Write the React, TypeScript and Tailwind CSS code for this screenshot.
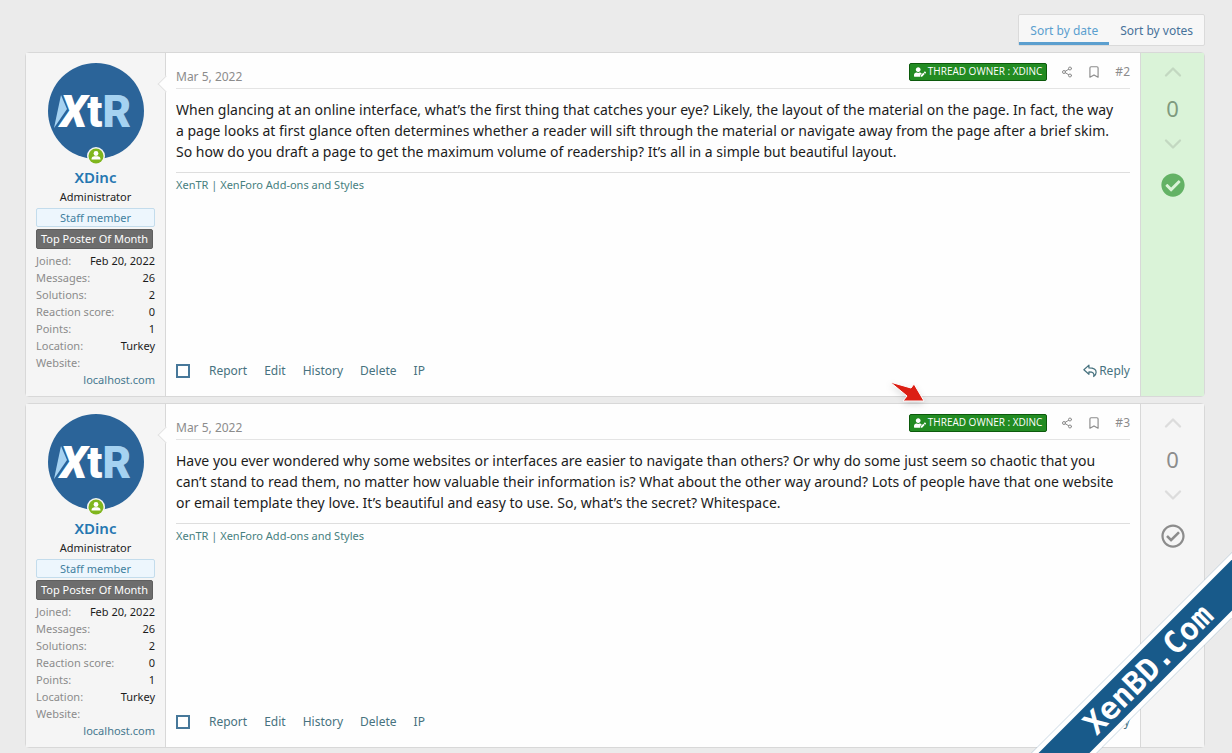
import { FaCheckCircle, FaRegCheckCircle, FaUserEdit } from "react-icons/fa";
import { Bookmark, ChevronDown, ChevronUp, Share2 } from "lucide-react";

type Post = {
  id: number;
  date: string;
  body: string;
  votes: number;
  isSolution: boolean;
};

const posts: Post[] = [
  {
    id: 2,
    date: "Mar 5, 2022",
    body: "When glancing at an online interface, what’s the first thing that catches your eye? Likely, the layout of the material on the page. In fact, the way a page looks at first glance often determines whether a reader will sift through the material or navigate away from the page after a brief skim. So how do you draft a page to get the maximum volume of readership? It’s all in a simple but beautiful layout.",
    votes: 0,
    isSolution: true,
  },
  {
    id: 3,
    date: "Mar 5, 2022",
    body: "Have you ever wondered why some websites or interfaces are easier to navigate than others? Or why do some just seem so chaotic that you can’t stand to read them, no matter how valuable their information is? What about the other way around? Lots of people have that one website or email template they love. It’s beautiful and easy to use. So, what’s the secret? Whitespace.",
    votes: 0,
    isSolution: false,
  },
];

const stats = [
  { label: "Joined:", value: "Feb 20, 2022" },
  { label: "Messages:", value: "26" },
  { label: "Solutions:", value: "2" },
  { label: "Reaction score:", value: "0" },
  { label: "Points:", value: "1" },
  { label: "Location:", value: "Turkey" },
];

const actions = ["Report", "Edit", "History", "Delete", "IP"];

function Avatar() {
  return (
    <a href="#member" aria-label="XDinc" className="relative block size-24">
      <svg viewBox="0 0 96 96" className="size-24">
        <circle cx="48" cy="48" r="48" fill="#2b6499" />
        <path d="M13 32 L19 46 L6 65 Z" fill="#a5d2f1" />
        <text x="12" y="64" fontFamily="Roboto, sans-serif" fontWeight="900" fontSize="44" fill="#fff">
          <tspan fontStyle="italic">X</tspan>
          <tspan>t</tspan>
          <tspan fill="#a5d2f1">R</tspan>
        </text>
      </svg>
      {/* online indicator */}
      <svg viewBox="0 0 18 18" className="absolute -bottom-1.5 left-[39px] size-[18px]">
        <circle cx="9" cy="9" r="9" fill="#f5f5f5" />
        <circle cx="9" cy="9" r="7.5" fill="#7fb61d" />
        <circle cx="9" cy="6.5" r="2.4" fill="#fff" />
        <path d="M4.5 12.5c0-3 2-3.2 4.5-3.2s4.5.2 4.5 3.2z" fill="#fff" />
      </svg>
    </a>
  );
}

function UserPanel() {
  return (
    <aside className="relative flex w-[140px] shrink-0 flex-col items-center border-r border-[#d8d8d8] bg-[#f5f5f5] px-2.5 pt-2.5 pb-2">
      <span className="absolute top-[25px] -right-[7px] size-3 rotate-45 border-b border-l border-[#e2e2e2] bg-[#fefefe]" />
      <Avatar />
      <a href="#member" className="mt-2 text-[15px] leading-5 font-semibold text-[#2577b1]">
        XDinc
      </a>
      <p className="text-[11px] leading-[19px] text-[#222]">Administrator</p>
      <em className="mt-0.5 block w-full rounded-xs border border-[#c3dcec] bg-[#edf6fd] text-center text-[11px] leading-[17px] text-[#3f7f9f] not-italic">
        Staff member
      </em>
      <strong className="mt-0.5 mr-0.5 block self-stretch rounded-xs border border-[#5f5f5f] bg-[#6d6d6d] text-center text-[11px] leading-[18px] font-normal whitespace-nowrap text-white">
        Top Poster Of Month
      </strong>
      <dl className="mt-[3px] w-full text-[11px] leading-[17px]">
        {stats.map((stat) => (
          <div key={stat.label} className="flex justify-between">
            <dt className="text-[#8c8c8c]">{stat.label}</dt>
            <dd className="text-[#1c1c1c]">{stat.value}</dd>
          </div>
        ))}
        <div>
          <dt className="text-[#8c8c8c]">Website:</dt>
          <dd className="text-right">
            <a href="#website" className="text-[#47788f]">
              localhost.com
            </a>
          </dd>
        </div>
      </dl>
    </aside>
  );
}

function ReplyIcon() {
  return (
    <svg
      viewBox="0 0 16 16"
      className="size-3.5"
      fill="none"
      stroke="currentColor"
      strokeWidth="1.4"
      strokeLinejoin="round"
    >
      <path d="M1 6.5 L6.8 1.3 V4.5 C11.5 4.5 15 5.5 15 9.5 C15 11.8 13.8 13.3 12.2 14.3 C13.2 11 12 9 6.8 9 V11.8 Z" />
    </svg>
  );
}

function VotePanel({ post }: { post: Post }) {
  return (
    <div
      className={`flex w-16 shrink-0 flex-col items-center border-l border-[#d8d8d8] pt-[5px] ${
        post.isSolution ? "bg-[#daf3d8] text-[#c3d8c1]" : "bg-[#f5f5f5] text-[#dcdcdc]"
      }`}
    >
      <button aria-label="Upvote">
        <ChevronUp className="size-7" strokeWidth={2} />
      </button>
      <span
        className={`my-2 text-[22px] leading-7 ${
          post.isSolution ? "text-[#7f9a7e]" : "text-[#8c8c8c]"
        }`}
      >
        {post.votes}
      </span>
      <button aria-label="Downvote">
        <ChevronDown className="size-7" strokeWidth={2} />
      </button>
      <button aria-label="Mark as solution" className="mt-[15px]">
        {post.isSolution ? (
          <FaCheckCircle className="size-6 text-[#63b265]" />
        ) : (
          <FaRegCheckCircle className="size-6 text-[#8c8c8c]" />
        )}
      </button>
    </div>
  );
}

function PostItem({ post }: { post: Post }) {
  return (
    <article className="flex rounded-sm border border-[#d8d8d8] bg-[#fefefe]">
      <UserPanel />
      <div className="flex min-w-0 flex-1 flex-col px-2.5 pt-2.5">
        <header className="flex items-start justify-between border-b border-[#e4e4e4] pb-0.5 text-xs text-[#8c8c8c]">
          <a href="#post" className="mt-[5px] leading-[18px]">
            {post.date}
          </a>
          <ul className="flex h-[18px] items-center">
            <li className="mr-3.5 flex h-[18px] items-center gap-0.5 rounded-xs border border-[#0c5a0c] bg-[#228b22] px-1 font-['Open_Sans',sans-serif] text-[10px] font-medium text-white">
              <FaUserEdit className="size-3" />
              THREAD OWNER : XDINC
            </li>
            <li className="mr-3.5">
              <button aria-label="Share" className="block">
                <Share2 className="size-3" />
              </button>
            </li>
            <li className="mr-3.5">
              <button aria-label="Bookmark" className="block">
                <Bookmark className="size-3.5" />
              </button>
            </li>
            <li>
              <a href="#post">#{post.id}</a>
            </li>
          </ul>
        </header>
        <p className="mt-2.5 pr-2 text-[14px] leading-[21px] text-[#1c1c1c]">{post.body}</p>
        <div className="mt-2.5 border-t border-[#dedede] pt-1 text-[11px] leading-4 text-[#47807f]">
          <a href="#xentr">XenTR | XenForo Add-ons and Styles</a>
        </div>
        <footer className="mt-auto flex items-center justify-between pb-4 text-xs leading-[18px] text-[#47727f]">
          <div className="flex items-center gap-[17px]">
            <input
              type="checkbox"
              aria-label="Select post"
              className="mr-0.5 size-3.5 appearance-none border-2 border-[#47789a] bg-white"
            />
            {actions.map((action) => (
              <a href="#action" key={action}>
                {action}
              </a>
            ))}
          </div>
          <a href="#reply" className="flex items-center gap-0.5">
            <ReplyIcon />
            Reply
          </a>
        </footer>
      </div>
      <VotePanel post={post} />
    </article>
  );
}

function Pointer() {
  return (
    <svg
      viewBox="0 0 38 30"
      className="pointer-events-none absolute -top-[26px] right-[279px] h-[30px] w-[38px] drop-shadow-md"
    >
      <path
        d="M2 5 L23 11 L26 7 L36 24 L15 24 L19 19 Z"
        fill="#dc1f14"
        stroke="#fff"
        strokeWidth="1"
        strokeLinejoin="round"
      />
    </svg>
  );
}

function Ribbon() {
  return (
    <div className="pointer-events-none fixed right-0 bottom-0 size-[210px] overflow-hidden">
      <div className="absolute top-[103px] -left-[34px] flex h-[46px] w-80 -rotate-45 items-center justify-center border-y-[5px] border-white bg-[#185a8a] font-['DejaVu_Sans_Mono',monospace] text-[31px] leading-none font-bold text-white">
        XenBD.Com
      </div>
    </div>
  );
}

export default function App() {
  return (
    <main className="min-h-screen bg-[#ebebeb] px-[25px] pt-3.5 pb-1 pr-[27px] font-['Noto_Sans','Open_Sans',sans-serif]">
      <nav className="mb-1.5 flex justify-end">
        <div className="flex rounded-xs border border-[#dadada] bg-[#f7f7f7] text-xs leading-[18px]">
          <a href="#date" className="border-b-[3px] border-[#5b9fcf] px-[11px] pt-[7px] pb-0.5 text-[#5b9fcf]">
            Sort by date
          </a>
          <a href="#votes" className="border-b-[3px] border-transparent px-[11px] pt-[7px] pb-0.5 text-[#47729a]">
            Sort by votes
          </a>
        </div>
      </nav>
      <div className="flex flex-col gap-1.5">
        {posts.map((post, index) => (
          <div key={post.id} className="relative">
            <PostItem post={post} />
            {index === 1 && <Pointer />}
          </div>
        ))}
      </div>
      <Ribbon />
    </main>
  );
}
